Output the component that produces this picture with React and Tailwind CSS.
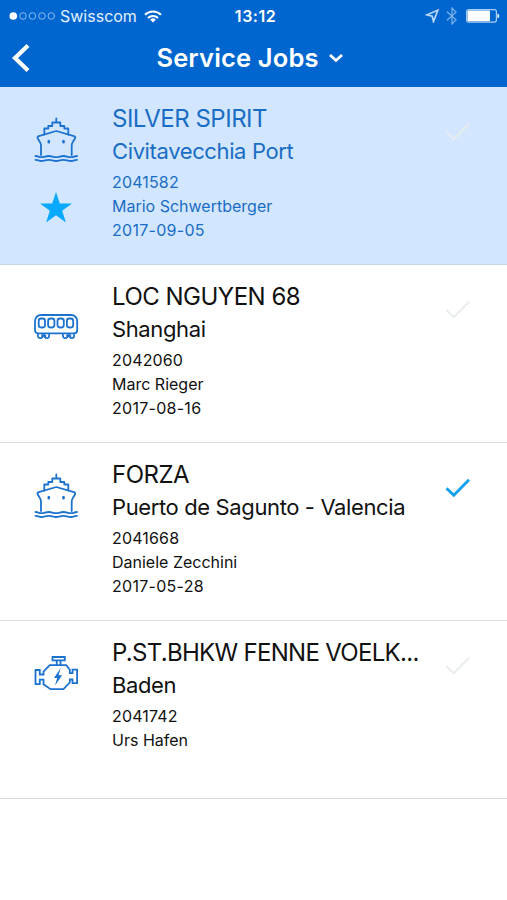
import React from 'react';

const jobs = [
  { id: '2041582', type: 'ship', name: 'SILVER SPIRIT', place: 'Civitavecchia Port', person: 'Mario Schwertberger', date: '2017-09-05', active: true, starred: true },
  { id: '2042060', type: 'train', name: 'LOC NGUYEN 68', place: 'Shanghai', person: 'Marc Rieger', date: '2017-08-16' },
  { id: '2041668', type: 'ship', name: 'FORZA', place: 'Puerto de Sagunto - Valencia', person: 'Daniele Zecchini', date: '2017-05-28', done: true },
  { id: '2041742', type: 'engine', name: 'P.ST.BHKW FENNE VOELK...', place: 'Baden', person: 'Urs Hafen' },
];

const iconProps = {
  width: 46,
  height: 46,
  viewBox: '0 0 46 46',
  fill: 'none',
  stroke: '#1b72cf',
  strokeWidth: 1.8,
  strokeLinejoin: 'round',
  strokeLinecap: 'round',
};

const ShipIcon = () => (
  <svg {...iconProps}>
    <path d="M23.300 1.500v4M15.300 11.500V9h4V5.500h8V9h4v2.500M11.300 17.500v-6h4M31.300 11.500h4v6" />
    <path d="M8 38v-9.500c0-1.700-.5-2.700-1.400-4l-1.700-2.700c-.8-1.300-.4-2.300.9-2.700L23.300 14l17.600 5.100c1.300.4 1.700 1.400.9 2.700l-1.700 2.700c-.9 1.300-1.400 2.300-1.400 4V38" />
    <ellipse cx="15.800" cy="24.700" rx=".7" ry="1.200" fill="#1b72cf" strokeWidth="1.400" />
    <ellipse cx="30.500" cy="24.700" rx=".7" ry="1.200" fill="#1b72cf" strokeWidth="1.400" />
    <path d="M2.500 39c3 0 3 1.200 6 1.200s4-1.200 7.300-1.200 4 1.200 7.300 1.200 4-1.200 7.300-1.200 4 1.200 7.300 1.200 3.500-1.200 6.300-1.200" />
    <path d="M2.500 42.800c3 0 3 1.200 6 1.200s4-1.200 7.300-1.200 4 1.200 7.300 1.200 4-1.200 7.300-1.200 4 1.200 7.300 1.200 3.500-1.200 6.300-1.200" />
  </svg>
);

const TrainIcon = () => (
  <svg {...iconProps}>
    <path d="M4.800 38.300h36.400a3 3 0 0 0 3-3V26a6 6 0 0 0-6-6H8a6 6 0 0 0-6 6v9.300a3 3 0 0 0 2.800 3z" />
    <rect x="5.700" y="23.500" width="6.300" height="9" rx="2.400" />
    <rect x="15.100" y="23.500" width="6.300" height="9" rx="2.400" />
    <rect x="24.500" y="23.500" width="6.300" height="9" rx="2.400" />
    <rect x="33.900" y="23.500" width="6.300" height="9" rx="2.400" />
    <path d="M5 39.500c-.5 2 .5 3.700 2.300 3.700s2.700-1.500 2.200-3.500M11.500 39.500c-.5 2 .5 3.700 2.300 3.700s2.700-1.500 2.200-3.500M9 41h3.500" />
    <path d="M30 39.500c-.5 2 .5 3.700 2.300 3.700s2.700-1.500 2.200-3.500M36.500 39.500c-.5 2 .5 3.700 2.300 3.700s2.700-1.500 2.200-3.500M34 41h3.500" />
  </svg>
);

const EngineIcon = () => (
  <svg {...iconProps} strokeLinejoin="miter">
    <path d="M19.500 6h12.300v3.300H19.500zM23.700 9.300V14M27.500 9.300V14" />
    <path d="M16.700 14.200h16.600l3.500 4.500v3.500h2.700v-3.500h4.600v13.500h-4.600v-3.700h-2.700v3L30.500 38.200H17.500l-7-5v-4.500H6.800v4.500H2.500V19h4.300v4.500h3.700V20.500z" />
    <path d="M27.700 17L21 27h3.200L22 34.500l7.200-10.300h-3.600z" fill="#1b72cf" stroke="none" />
  </svg>
);

const typeIcons = { ship: ShipIcon, train: TrainIcon, engine: EngineIcon };

const Check = ({ color, width }) => (
  <svg width="26" height="20" viewBox="0 0 26 20" fill="none" stroke={color} strokeWidth={width}>
    <path d="M1.500 10.200l7.300 7L24 1.800" />
  </svg>
);

const StatusBar = () => (
  <div className="grid h-7 grid-cols-3 items-center pt-0.5 text-[16px] leading-7">
    <div className="flex items-center pl-[9px]">
      <svg width="47" height="10" viewBox="0 0 47 10" fill="none" stroke="#8dbcf0">
        <circle cx="4.300" cy="5" r="3.800" fill="#fff" stroke="none" />
        <circle cx="14" cy="5" r="3.300" />
        <circle cx="23.500" cy="5" r="3.300" />
        <circle cx="33" cy="5" r="3.300" />
        <circle cx="42.300" cy="5" r="3.300" />
      </svg>
      <span className="ml-1 text-[#e3f0ff]">Swisscom</span>
      <svg className="ml-[7px]" width="18" height="13" viewBox="0 0 18 13" fill="none" stroke="#fff" strokeWidth="2">
        <path d="M1 4.800a11.300 11.300 0 0 1 16 0M4 8a7 7 0 0 1 10 0" />
        <path d="M9 12.500L6.200 9.700a4 4 0 0 1 5.600 0z" fill="#fff" stroke="none" />
      </svg>
    </div>
    <span className="pl-1 text-center text-[16px] font-semibold tracking-[0.5px]">13:12</span>
    <div className="flex items-center justify-end pr-[7px]">
      <svg width="14" height="14" viewBox="0 0 14 14" fill="none" stroke="#b9d7f8" strokeWidth="1.700">
        <path d="M12.800 1.200L1.800 5.800l5.400 1.400 1.300 5.300z" />
      </svg>
      <svg className="ml-[7px]" width="12" height="18" viewBox="0 0 12 18" fill="none" stroke="#7fb2ec" strokeWidth="1.200">
        <path d="M1 4.800l9 8L6 17V1l4 4.200-9 8" />
      </svg>
      <svg className="ml-2" width="34" height="14" viewBox="0 0 34 14">
        <rect x=".6" y=".6" width="29.800" height="12.500" rx="2" fill="none" stroke="#a8cdf6" strokeWidth="1.200" />
        <rect x="1.500" y="1.500" width="22.500" height="10.800" rx="1" fill="#fff" />
        <path d="M31.500 4.500c2.300.8 2.300 4 0 4.800z" fill="#fff" />
      </svg>
    </div>
  </div>
);

const Header = () => (
  <header className="h-[87px] bg-[#0066cf] text-white">
    <StatusBar />
    <div className="grid h-[59px] grid-cols-[40px_1fr_40px] items-center">
      <button className="pl-[11px]" title="Back">
        <svg width="19" height="30" viewBox="0 0 19 30" fill="none" stroke="#fff" strokeWidth="4.200">
          <path d="M17 2.500L4 15l13 12.500" />
        </svg>
      </button>
      <button className="flex items-center justify-center pr-2">
        <h1 className="text-[25.5px] font-semibold leading-[30px] tracking-[0.15px]">Service Jobs</h1>
        <svg className="ml-[10px]" width="14" height="10" viewBox="0 0 14 10" fill="none" stroke="#fff" strokeWidth="2.700">
          <path d="M1 2l6 5.500L13 2" />
        </svg>
      </button>
    </div>
  </header>
);

const JobRow = ({ job }) => {
  const Icon = typeIcons[job.type];
  return (
    <li className={job.active ? 'flex h-[178px] border-b border-[#c5d5e6] bg-[#d2e7ff] text-[#1a6dc4]' : 'flex h-[178px] border-b border-[#dcdcdc] bg-white text-[#111]'}>
      <div className="flex w-28 shrink-0 flex-col items-center pt-[30px]">
        <Icon />
        {job.starred && (
          <svg className="mt-[29px]" width="32" height="31" viewBox="0 0 32 31" fill="#09a9ff">
            <path d="M16 0l3.800 11.600H32l-9.800 7.200L25.900 30.500 16 23.300 6.100 30.500l3.700-11.700L0 11.600h12.200z" />
          </svg>
        )}
      </div>
      <div className="w-[312px] shrink-0 whitespace-nowrap pt-4">
        <div className={job.name.length > 20 ? 'text-[24px] leading-8 tracking-[-0.7px]' : 'text-[24px] leading-8 tracking-[-0.5px]'}>{job.name}</div>
        <div className="text-[22px] leading-8 tracking-[-0.38px]">{job.place}</div>
        <div className="pt-[3px] text-[16px] leading-6">
          <div className="tracking-[0.15px]">{job.id}</div>
          <div>{job.person}</div>
          <div className="tracking-[0.28px]">{job.date}</div>
        </div>
      </div>
      <div className="pl-[21px] pt-[35px]">
        <Check color={job.done ? '#12a0ec' : '#e8ecee'} width={job.done ? 2.8 : 2} />
      </div>
    </li>
  );
};

const App = () => (
  <div className="h-[900px] w-[507px] overflow-hidden bg-white font-['Inter',sans-serif]">
    <Header />
    <ul>
      {jobs.map((job) => (
        <JobRow key={job.id} job={job} />
      ))}
    </ul>
  </div>
);

export default App;
